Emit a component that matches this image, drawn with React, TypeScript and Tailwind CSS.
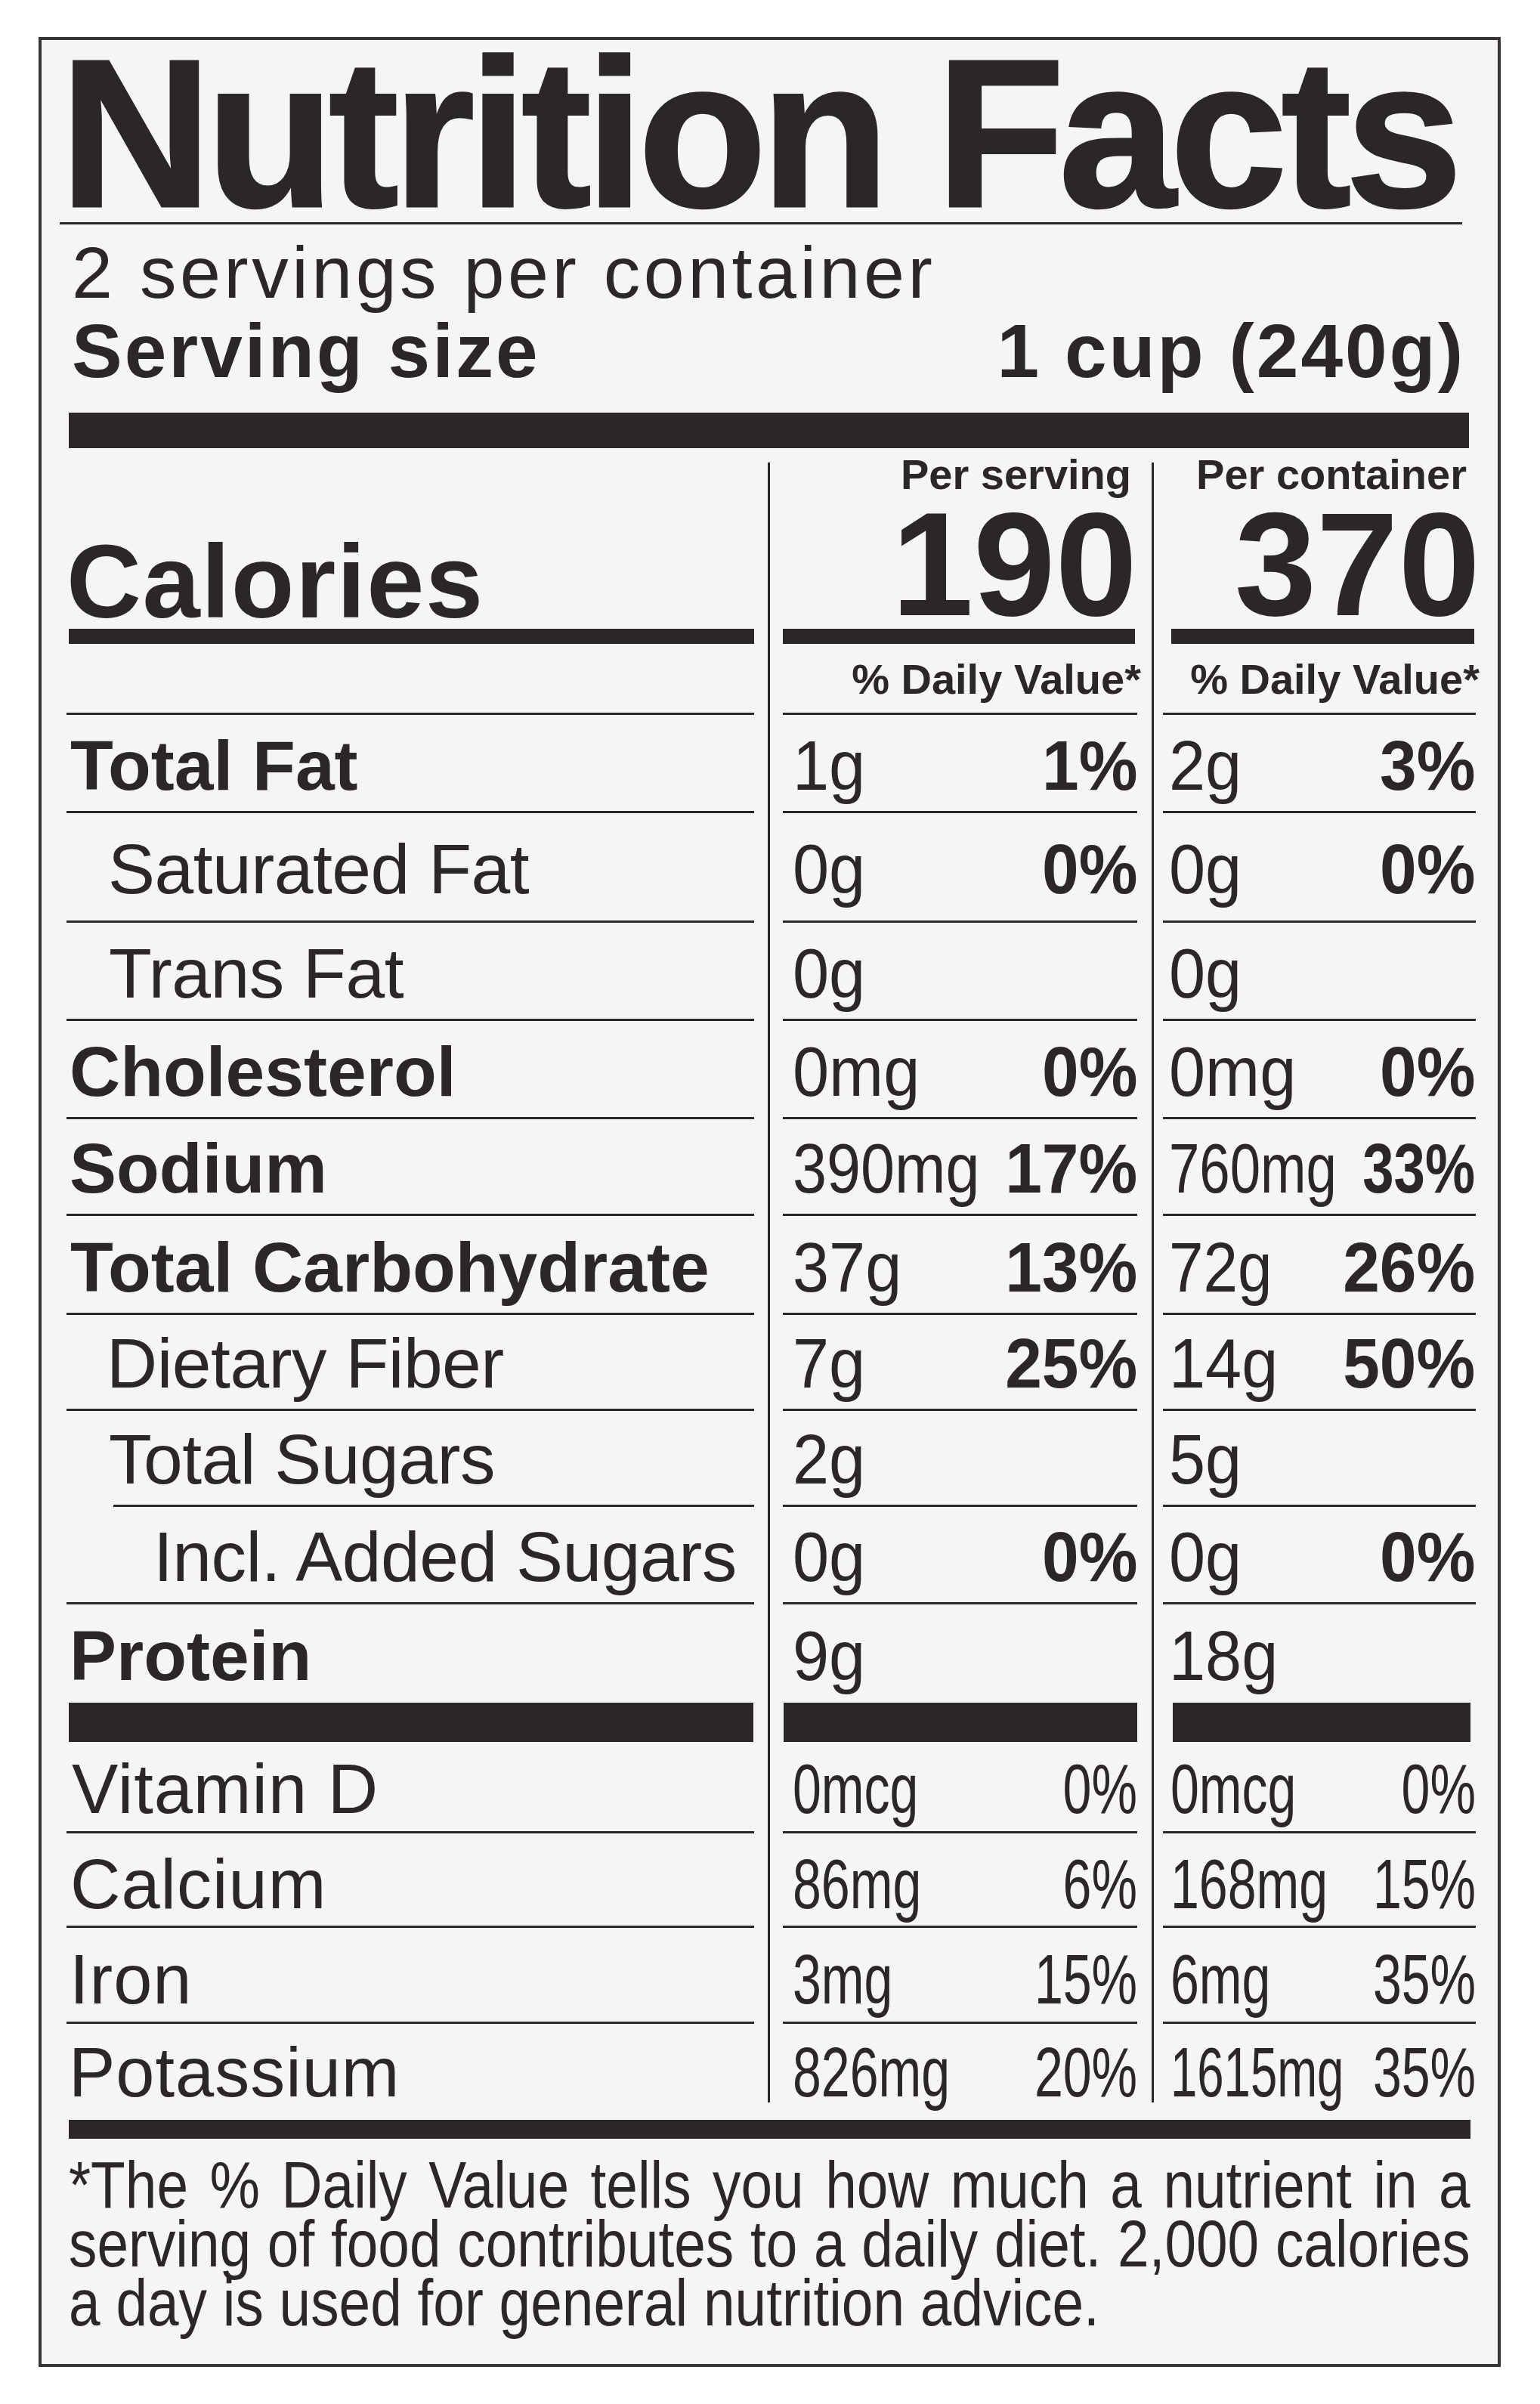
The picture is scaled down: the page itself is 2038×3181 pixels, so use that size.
import React from 'react';

const INK = 'bg-[#2b2728]';

type Nutrient = {
  label: string;
  pad: string;
  bold?: boolean;
  h: string;
  pb: string;
  noLine?: boolean;
  leftLine?: string;
  ms: string;
  msc?: string;
  mp?: string;
  mpc?: string;
  cs: string;
  csc?: string;
  cp?: string;
  cpc?: string;
};

const nutrients: Nutrient[] = [
  { label: 'Total Fat', pad: 'pl-[5px]', bold: true, h: 'h-[130px]', pb: 'pb-[13px]', ms: '1g', mp: '1%', cs: '2g', cp: '3%' },
  { label: 'Saturated Fat', pad: 'pl-[55px]', h: 'h-[145px]', pb: 'pb-[21px]', ms: '0g', mp: '0%', cs: '0g', cp: '0%' },
  { label: 'Trans Fat', pad: 'pl-[56px]', h: 'h-[130px]', pb: 'pb-[13px]', ms: '0g', cs: '0g' },
  { label: 'Cholesterol', pad: 'pl-[4px]', bold: true, h: 'h-[130px]', pb: 'pb-[13px]', ms: '0mg', mp: '0%', cs: '0mg', cp: '0%' },
  {
    label: 'Sodium', pad: 'pl-[4px]', bold: true, h: 'h-[128px]', pb: 'pb-[13px]',
    ms: '390mg', msc: 'scale-x-[0.87]', mp: '17%', cs: '760mg', csc: 'scale-x-[0.78]', cp: '33%', cpc: 'scale-x-[0.8]',
  },
  { label: 'Total Carbohydrate', pad: 'pl-[5px]', bold: true, h: 'h-[131px]', pb: 'pb-[13px]', ms: '37g', mp: '13%', cs: '72g', csc: 'scale-x-[0.88]', cp: '26%' },
  { label: 'Dietary Fiber', pad: 'pl-[53px]', h: 'h-[127px]', pb: 'pb-[13px]', ms: '7g', mp: '25%', cs: '14g', cp: '50%' },
  { label: 'Total Sugars', pad: 'pl-[56px]', h: 'h-[127px]', pb: 'pb-[13px]', leftLine: 'ml-[62px]', ms: '2g', cs: '5g' },
  { label: 'Incl. Added Sugars', pad: 'pl-[115px]', h: 'h-[129px]', pb: 'pb-[13px]', ms: '0g', mp: '0%', cs: '0g', cp: '0%' },
  { label: 'Protein', pad: 'pl-[4px]', bold: true, h: 'h-[130px]', pb: 'pb-[15px]', noLine: true, ms: '9g', cs: '18g' },
];

const vitamins: Nutrient[] = [
  { label: 'Vitamin D', pad: 'pl-[7px]', h: 'h-[121px]', pb: 'pb-[10px]', ms: '0mcg', mp: '0%', cs: '0mcg', cp: '0%' },
  { label: 'Calcium', pad: 'pl-[5px]', h: 'h-[125px]', pb: 'pb-[9px]', ms: '86mg', mp: '6%', cs: '168mg', cp: '15%' },
  { label: 'Iron', pad: 'pl-[4px]', h: 'h-[127px]', pb: 'pb-[10px]', ms: '3mg', mp: '15%', cs: '6mg', cp: '35%' },
  {
    label: 'Potassium', pad: 'pl-[3px]', h: 'h-[110px]', pb: 'pb-[0px]', noLine: true,
    ms: '826mg', mp: '20%', cs: '1615mg', csc: 'scale-x-[0.69]', cp: '35%',
  },
];

function Rule({ className = '' }: { className?: string }) {
  return <div className={`h-[3px] shrink-0 ${INK} ${className}`} />;
}

function Row({ r, children, lineCls = '' }: { r: Nutrient; children: React.ReactNode; lineCls?: string }) {
  return (
    <div className={`${r.h} flex flex-col`}>
      <div className={`flex-1 min-w-0 flex items-end ${r.pb}`}>{children}</div>
      {!r.noLine && <Rule className={lineCls} />}
    </div>
  );
}

// amount on the left, %DV pushed to the right; amount may overflow its box
function Values({ amt, amtCls, pct, pctCls, bold, pad, size }: {
  amt: string; amtCls: string; pct?: string; pctCls: string; bold?: boolean; pad: string; size: string;
}) {
  return (
    <div className={`flex-1 min-w-0 flex items-end whitespace-nowrap ${pad} ${size}`}>
      <span className={`flex-1 min-w-0 w-0 origin-left ${amtCls}`}>{amt}</span>
      {pct && <span className={`shrink-0 origin-right ${bold ? 'font-bold' : ''} ${pctCls}`}>{pct}</span>}
    </div>
  );
}

export default function App() {
  return (
    <div className="w-[2038px] min-h-[3181px] bg-white pt-[49px] pl-[51px] text-[#2b2728] font-['Liberation_Sans',Arial,sans-serif]">
      <div className="w-[1935px] h-[3083px] border-[4px] border-[#383435] bg-[#f5f5f3] overflow-hidden pl-[36px]">
        <div className="w-[1856px]">
          {/* Heading */}
          <div className="-ml-[12px] mt-[12px] text-[279px] leading-[222px] font-bold tracking-[-8px] whitespace-nowrap [-webkit-text-stroke:3px_#2b2728]">
            Nutrition Facts
          </div>
          <Rule className="-ml-[12px] mr-[12px] mt-[7px]" />
          <div className="ml-[4px] mt-[16px] text-[97px] leading-[96px] tracking-[4.5px] whitespace-nowrap">
            2 servings per container
          </div>
          <div className="mt-[6px] flex justify-between items-end text-[100px] leading-[98px] font-bold tracking-[3px] whitespace-nowrap">
            <span className="ml-[4px]">Serving size</span>
            <span className="mr-[8px]">1 cup (240g)</span>
          </div>
          <div className={`mt-[33px] h-[47px] mr-[3px] ${INK}`} />

          {/* Table */}
          <div className="-ml-[3px] flex w-[1865px]">
            {/* labels */}
            <div className="w-[910px] flex flex-col">
              <div className="h-[239px] flex items-end pb-[2px]">
                <span className="text-[137px] leading-[120px] font-bold tracking-[1.5px]">Calories</span>
              </div>
              <div className={`h-[20px] ml-[3px] ${INK}`} />
              <div className="h-[94px] flex flex-col justify-end">
                <Rule />
              </div>
              {nutrients.map((r) => (
                <Row key={r.label} r={r} lineCls={r.leftLine}>
                  <span className={`${r.pad} text-[93px] leading-[93px] whitespace-nowrap ${r.bold ? 'font-bold' : 'tracking-[-0.5px]'}`}>
                    {r.label}
                  </span>
                </Row>
              ))}
              <div className={`h-[52px] ml-[3px] mr-[1px] ${INK}`} />
              {vitamins.map((r) => (
                <Row key={r.label} r={r}>
                  <span className={`${r.pad} text-[92px] leading-[92px] tracking-[1px] whitespace-nowrap`}>{r.label}</span>
                </Row>
              ))}
            </div>

            <div className="w-[38px] pt-[19px] pb-[6px] flex justify-center">
              <div className={`w-[3px] ${INK}`} />
            </div>

            {/* per serving */}
            <div className="w-[469px] flex flex-col">
              <div className="h-[239px] flex flex-col items-end pt-[7px]">
                <span className="pr-[8px] text-[56px] leading-[56px] font-bold whitespace-nowrap">Per serving</span>
                <span className="mt-[15px] text-[195px] leading-[150px] font-bold">190</span>
              </div>
              <div className={`h-[20px] mr-[3px] ${INK}`} />
              <div className="h-[94px] flex flex-col">
                <div className="flex-1 flex items-end justify-end pb-[16px] -mr-[5px]">
                  <span className="text-[56px] leading-[56px] font-bold whitespace-nowrap">% Daily Value*</span>
                </div>
                <Rule />
              </div>
              {nutrients.map((r) => (
                <Row key={r.label} r={r}>
                  <Values
                    amt={r.ms} amtCls={r.msc ?? 'scale-x-[0.93]'}
                    pct={r.mp} pctCls={r.mpc ?? 'scale-x-[0.94]'} bold
                    pad="pl-[13px]" size="text-[93px] leading-[93px]"
                  />
                </Row>
              ))}
              <div className={`h-[52px] ml-[1px] ${INK}`} />
              {vitamins.map((r) => (
                <Row key={r.label} r={r}>
                  <Values
                    amt={r.ms} amtCls={r.msc ?? 'scale-x-[0.74]'}
                    pct={r.mp} pctCls={r.mpc ?? 'scale-x-[0.74]'}
                    pad="pl-[13px]" size="text-[92px] leading-[92px]"
                  />
                </Row>
              ))}
            </div>

            <div className="w-[34px] pt-[19px] pb-[6px] pl-[19px] flex">
              <div className={`w-[3px] ${INK}`} />
            </div>

            {/* per container */}
            <div className="w-[414px] flex flex-col">
              <div className="h-[239px] flex flex-col items-end pt-[7px]">
                <span className="pr-[12px] text-[56px] leading-[56px] font-bold whitespace-nowrap">Per container</span>
                <span className="mt-[15px] -mr-[6px] text-[195px] leading-[150px] font-bold">370</span>
              </div>
              <div className={`h-[20px] ml-[11px] mr-[2px] ${INK}`} />
              <div className="h-[94px] flex flex-col">
                <div className="flex-1 flex items-end justify-end pb-[16px] -mr-[5px]">
                  <span className="text-[56px] leading-[56px] font-bold whitespace-nowrap">% Daily Value*</span>
                </div>
                <Rule />
              </div>
              {nutrients.map((r) => (
                <Row key={r.label} r={r}>
                  <Values
                    amt={r.cs} amtCls={r.csc ?? 'scale-x-[0.93]'}
                    pct={r.cp} pctCls={r.cpc ?? 'scale-x-[0.94]'} bold
                    pad="pl-[8px] pr-[1px]" size="text-[93px] leading-[93px]"
                  />
                </Row>
              ))}
              <div className={`h-[52px] ml-[13px] mr-[7px] ${INK}`} />
              {vitamins.map((r) => (
                <Row key={r.label} r={r}>
                  <Values
                    amt={r.cs} amtCls={r.csc ?? 'scale-x-[0.74]'}
                    pct={r.cp} pctCls={r.cpc ?? 'scale-x-[0.74]'}
                    pad="pl-[10px]" size="text-[92px] leading-[92px]"
                  />
                </Row>
              ))}
            </div>
          </div>

          <div className={`mt-[17px] h-[25px] mr-[1px] ${INK}`} />

          {/* footnote */}
          <div className="mt-[22px] w-[2182px] origin-left scale-x-[0.85] text-[88px] leading-[78px]">
            <div className="text-justify [text-align-last:justify]">*The % Daily Value tells you how much a nutrient in a</div>
            <div className="text-justify [text-align-last:justify]">serving of food contributes to a daily diet. 2,000 calories</div>
            <div>a day is used for general nutrition advice.</div>
          </div>
        </div>
      </div>
    </div>
  );
}
